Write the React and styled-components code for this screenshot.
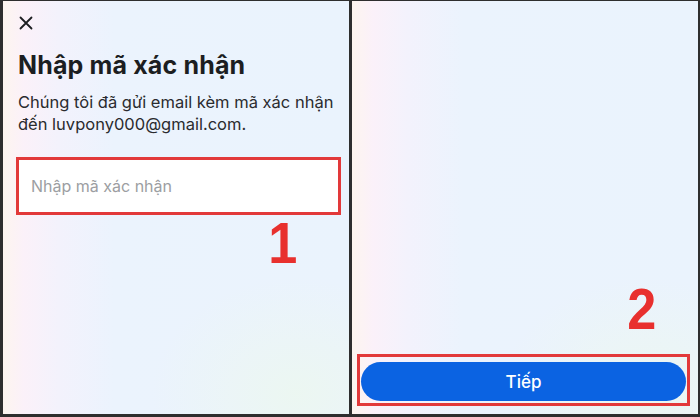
import React from "react";
import styled, { createGlobalStyle } from "styled-components";

const Global = createGlobalStyle`
  html, body { margin: 0; padding: 0; background: #2e2e2e; }
  * { box-sizing: border-box; }
`;

const Frame = styled.div`
  display: flex;
  width: 700px;
  height: 417px;
  background: #2e2e2e;
  padding: 1px 2px 3px 3px;
  gap: 3px;
  font-family: Inter, "Noto Sans", sans-serif;
`;

const Panel = styled.div`
  flex: 0 0 ${(p) => p.$width}px;
  min-width: 0;
  display: flex;
  flex-direction: column;
  justify-content: ${(p) => (p.$bottom ? "flex-end" : "flex-start")};
  padding: ${(p) => p.$pad};
  background:
    radial-gradient(ellipse 60% 40% at 85% 95%, rgba(236, 247, 240, 0.9), rgba(236, 247, 240, 0) 70%),
    linear-gradient(90deg, #fdf5ef 0%, #fbf1f9 6%, #f3f2fc 16%, #ebf3fd 32%, #eaf3fd 100%);
`;

const CloseButton = styled.button`
  width: 14px;
  height: 14px;
  padding: 0;
  border: 0;
  background: none;
  margin-left: 3px;
  display: block;
  cursor: pointer;
`;

const Title = styled.h1`
  margin: 20px 0 0 2px;
  font-size: 25px;
  line-height: 31px;
  font-weight: 700;
  color: #1c1e21;
  letter-spacing: 0.15px;
`;

const Subtitle = styled.p`
  margin: 10px 0 0 2px;
  font-size: 16.5px;
  line-height: 22px;
  color: #2a2b2e;
`;

const Highlight = styled.div`
  border: 3px solid #e2393a;
  padding: ${(p) => p.$pad || "0"};
  margin: ${(p) => p.$margin || "0"};
`;

const CodeInput = styled.input`
  display: block;
  width: 100%;
  min-width: 0;
  height: 52px;
  border: 0;
  outline: none;
  background: #fff;
  padding: 0 0 0 12px;
  font-family: Inter, "Noto Sans", sans-serif;
  font-size: 16px;
  color: #1c1e21;
  &::placeholder { color: #9c9ea2; }
`;

const StepNumber = styled.span`
  align-self: flex-end;
  font-family: "Liberation Sans Narrow", "Liberation Sans", Arial, sans-serif;
  font-weight: 700;
  font-size: 58px;
  line-height: 0.716;
  color: #e8302e;
  transform: scaleX(0.9);
  transform-origin: right center;
  margin: ${(p) => p.$margin};
`;

const NextButton = styled.button`
  display: block;
  width: 100%;
  height: 39px;
  border: 0;
  border-radius: 20px;
  background: #0b63e2;
  color: #fff;
  font-family: Inter, "Noto Sans", sans-serif;
  font-size: 17px;
  font-weight: 500;
  cursor: pointer;
`;

export default function App() {
  return (
    <>
      <Global />
      <Frame>
        <Panel $width={346} $pad="15px 8px 0 13px">
          <CloseButton aria-label="Đóng">
            <svg width="14" height="14" viewBox="0 0 14 14">
              <path d="M1.5 1.5 L12.5 12.5 M12.5 1.5 L1.5 12.5" stroke="#1c1e21" strokeWidth="1.8" strokeLinecap="round" />
            </svg>
          </CloseButton>
          <Title>Nhập mã xác nhận</Title>
          <Subtitle>
            Chúng tôi đã gửi email kèm mã xác nhận
            <br />
            đến luvpony000@gmail.com.
          </Subtitle>
          <Highlight $margin="22px 0 0 0">
            <CodeInput placeholder="Nhập mã xác nhận" />
          </Highlight>
          <StepNumber $margin="7px 44px 0 0">1</StepNumber>
        </Panel>
        <Panel $width={346} $bottom $pad="0 8px 8px 5px">
          <StepNumber $margin="0 34px 24px 0">2</StepNumber>
          <Highlight $pad="5px 1px 2px 1px">
            <NextButton>Tiếp</NextButton>
          </Highlight>
        </Panel>
      </Frame>
    </>
  );
}
